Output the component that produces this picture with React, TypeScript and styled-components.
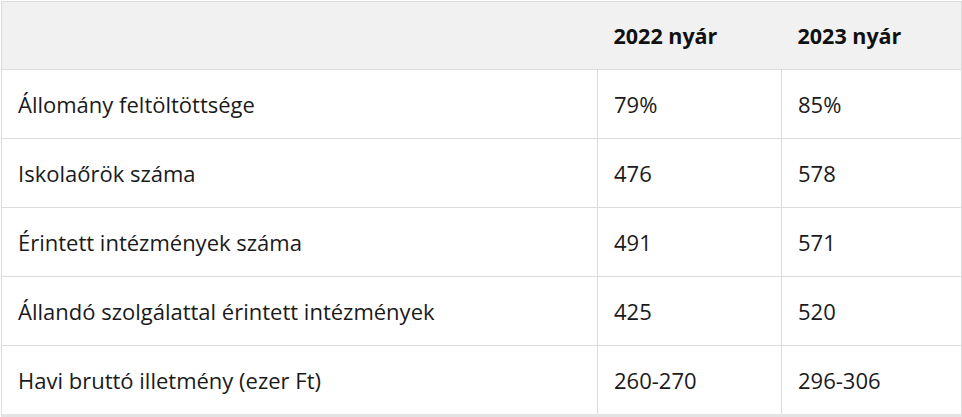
import React from "react";
import styled, { createGlobalStyle } from "styled-components";

const Global = createGlobalStyle`
  html, body { margin: 0; padding: 0; background: #fff; }
  body { font-family: "Open Sans", "Noto Sans", sans-serif; color: #1a1a1a; }
`;

const Wrap = styled.div`
  padding: 1px 1px 0 1px;
  width: 962px;
  box-sizing: border-box;
`;

const Table = styled.table`
  width: 960px;
  border-collapse: collapse;
  table-layout: fixed;
  border: 1px solid #dcdcdc;
  border-bottom: 3px solid #e3e3e3;
  font-size: 22px;
`;

const Col = styled.col<{ $w: number }>`
  width: ${(p) => p.$w}px;
`;

const Th = styled.th`
  background: #f1f1f1;
  height: 67px;
  padding: 0 16px;
  text-align: left;
  font-weight: 700;
  font-size: 21.5px;
  border-bottom: 1px solid #dcdcdc;
  color: #111;
`;

const Td = styled.td`
  height: 68px;
  padding: 0 16px;
  border: 1px solid #dcdcdc;
  border-top: none;
  vertical-align: middle;
`;

const rows: [string, string, string][] = [
  ["Állomány feltöltöttsége", "79%", "85%"],
  ["Iskolaőrök száma", "476", "578"],
  ["Érintett intézmények száma", "491", "571"],
  ["Állandó szolgálattal érintett intézmények", "425", "520"],
  ["Havi bruttó illetmény (ezer Ft)", "260-270", "296-306"],
];

export default function App() {
  return (
    <Wrap>
      <Global />
      <Table>
        <colgroup>
          <Col $w={596} />
          <Col $w={184} />
          <Col $w={180} />
        </colgroup>
        <thead>
          <tr>
            <Th></Th>
            <Th>2022 nyár</Th>
            <Th>2023 nyár</Th>
          </tr>
        </thead>
        <tbody>
          {rows.map((r) => (
            <tr key={r[0]}>
              {r.map((c, i) => (
                <Td key={i}>{c}</Td>
              ))}
            </tr>
          ))}
        </tbody>
      </Table>
    </Wrap>
  );
}
